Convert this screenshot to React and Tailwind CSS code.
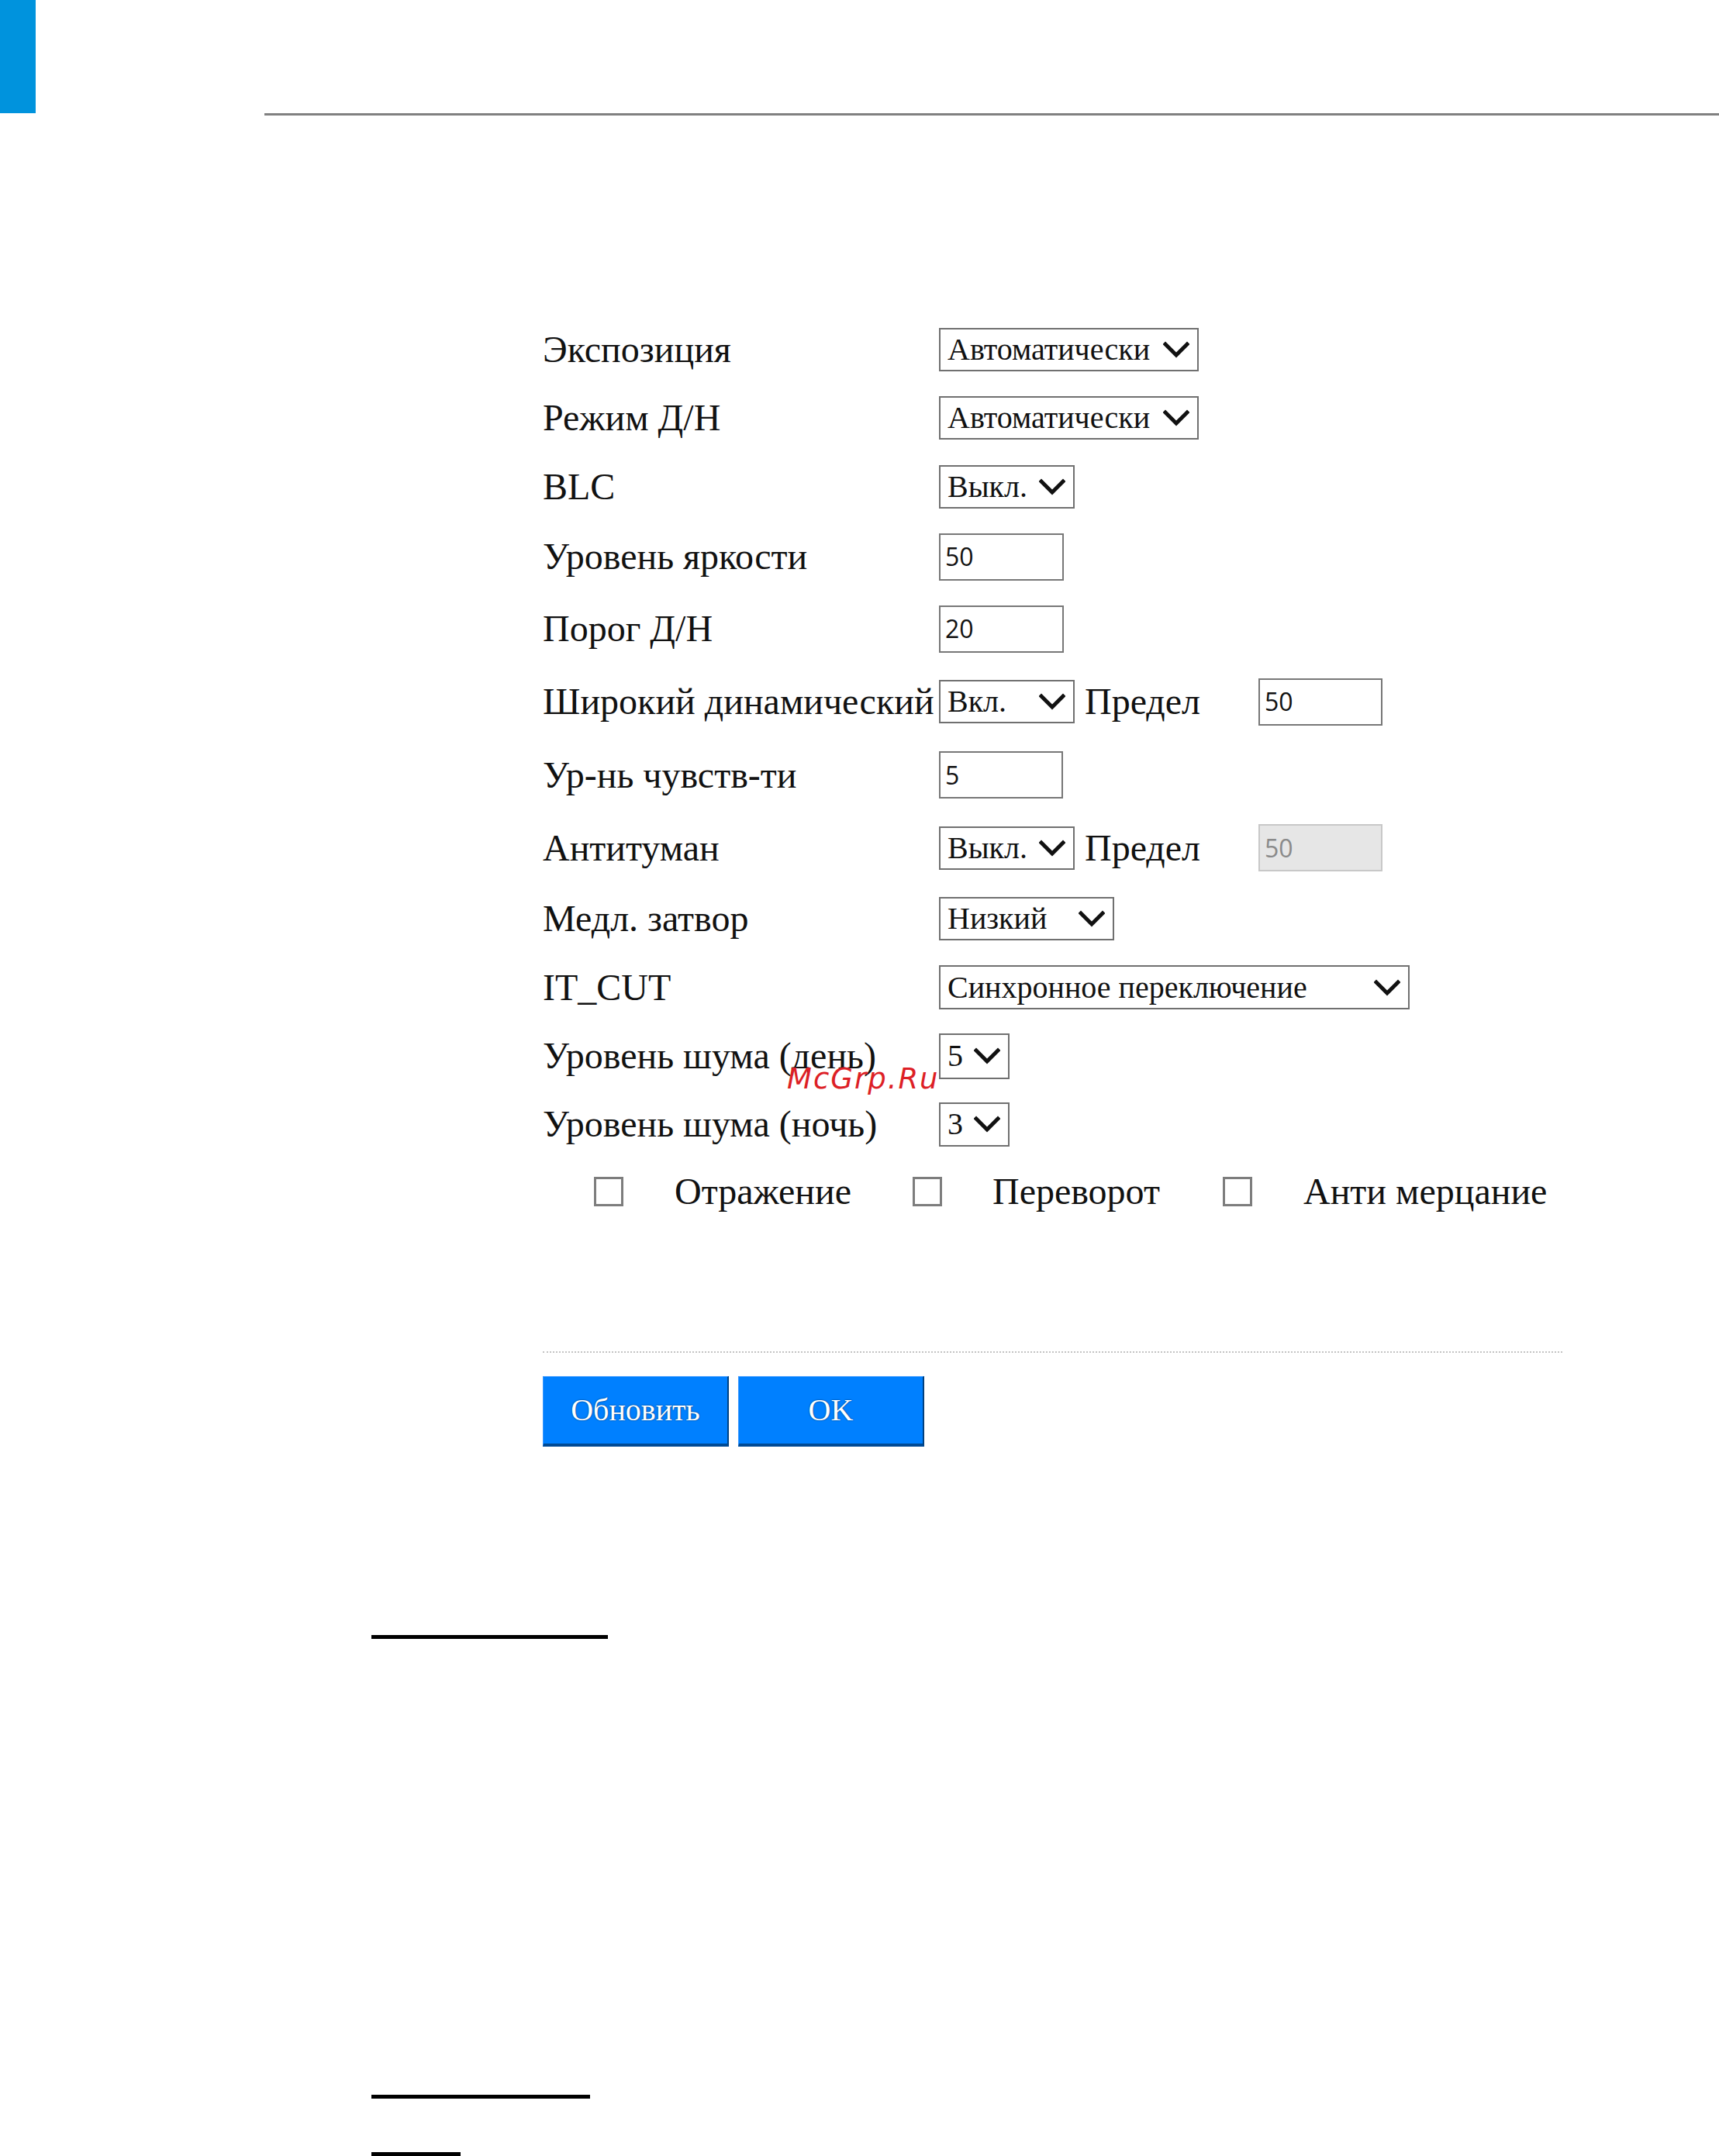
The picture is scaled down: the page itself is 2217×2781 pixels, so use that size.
import React from "react";

const serif = "font-['Liberation_Serif','Times_New_Roman',serif]";

function Chevron() {
  return (
    <svg width="34" height="22" viewBox="0 0 34 22" className="shrink-0">
      <polyline points="3,4 17,18 31,4" fill="none" stroke="#111" strokeWidth="5" strokeLinecap="square" />
    </svg>
  );
}

function Select({ w, h = "h-[56px]", text }) {
  return (
    <div className={`${w} ${h} shrink-0 border-2 border-[#707070] bg-white flex items-center justify-between pl-[9px] pr-[10px]`}>
      <span className={`${serif} text-[40px] leading-none text-[#111] whitespace-nowrap`}>{text}</span>
      <Chevron />
    </div>
  );
}

function Input({ w = "w-[161px]", value, disabled }) {
  return (
    <div
      className={`${w} h-[61px] shrink-0 border-2 flex items-center pl-[6px] font-['Open_Sans','Noto_Sans',sans-serif] text-[32px] leading-none ${
        disabled ? "bg-[#e6e6e6] border-[#c8c8c8] text-[#8a8a8a]" : "bg-white border-[#777777] text-[#111]"
      }`}
    >
      {value}
    </div>
  );
}

function Row({ h, label, children }) {
  return (
    <div className={`flex items-center ${h}`}>
      <div className={`w-[511px] shrink-0 ${serif} text-[48px] leading-none text-[#111] whitespace-nowrap`}>{label}</div>
      {children}
    </div>
  );
}

function Checkbox() {
  return <div className="w-[38px] h-[38px] shrink-0 border-[3px] border-[#7d7d7d] bg-white" />;
}

function Pred() {
  return <span className={`ml-[13px] w-[224px] shrink-0 ${serif} text-[48px] leading-none text-[#111]`}>Предел</span>;
}

export default function App() {
  return (
    <div className="relative w-[2217px] min-h-[2781px] bg-white overflow-hidden">
      <div className="flex">
        <div className="w-[46px] h-[146px] bg-[#0093dd] shrink-0" />
        <div className="flex-1 ml-[295px] pt-[146px]">
          <div className="h-[3px] bg-[#808080]" />
        </div>
      </div>

      <div className="ml-[700px] mt-[257px] flex flex-col">
        <Row h="h-[89px]" label="Экспозиция">
          <Select w="w-[335px]" text="Автоматически" />
        </Row>
        <Row h="h-[88px]" label="Режим Д/Н">
          <Select w="w-[335px]" text="Автоматически" />
        </Row>
        <Row h="h-[89px]" label="BLC">
          <Select w="w-[175px]" text="Выкл." />
        </Row>
        <Row h="h-[92px]" label="Уровень яркости">
          <Input value="50" />
        </Row>
        <Row h="h-[94px]" label="Порог Д/Н">
          <Input value="20" />
        </Row>
        <Row h="h-[94px]" label="Широкий динамический">
          <Select w="w-[175px]" text="Вкл." />
          <Pred />
          <Input w="w-[160px]" value="50" />
        </Row>
        <Row h="h-[95px]" label="Ур-нь чувств-ти">
          <Input w="w-[160px]" value="5" />
        </Row>
        <Row h="h-[93px]" label="Антитуман">
          <Select w="w-[175px]" text="Выкл." />
          <Pred />
          <Input w="w-[160px]" value="50" disabled />
        </Row>
        <Row h="h-[89px]" label="Медл. затвор">
          <Select w="w-[226px]" text="Низкий" />
        </Row>
        <Row h="h-[89px]" label="IT_CUT">
          <Select w="w-[607px]" h="h-[57px]" text="Синхронное переключение" />
        </Row>
        <Row h="h-[88px]" label="Уровень шума (день)">
          <Select w="w-[91px]" h="h-[59px]" text="5" />
        </Row>
        <Row h="h-[88px]" label="Уровень шума (ночь)">
          <Select w="w-[91px]" h="h-[57px]" text="3" />
        </Row>

        <div className={`flex items-center h-[86px] pl-[66px] ${serif} text-[48px] leading-none text-[#111]`}>
          <Checkbox />
          <span className="ml-[66px] w-[307px] shrink-0">Отражение</span>
          <Checkbox />
          <span className="ml-[65px] w-[297px] shrink-0">Переворот</span>
          <Checkbox />
          <span className="ml-[66px] whitespace-nowrap">Анти мерцание</span>
        </div>

        <div className="mt-[163px] w-[1315px] border-t-[2px] border-dotted border-[#c4c4c4]" />

        <div className="mt-[30px] flex gap-[12px]">
          {["Обновить", "OK"].map((t) => (
            <button
              key={t}
              className={`w-[240px] h-[91px] bg-[#0080ff] border-t border-t-[#5aa8ff] border-l border-l-[#3a98ff] border-r-2 border-r-[#00407f] border-b-[4px] border-b-[#004a94] flex items-center justify-center text-white ${serif} text-[40px] leading-none [text-shadow:0_0_2px_#002a55]`}
            >
              {t}
            </button>
          ))}
        </div>
      </div>

      <div className="ml-[479px] mt-[243px] w-[305px] h-[5px] bg-black" />
      <div className="ml-[479px] mt-[588px] w-[282px] h-[5px] bg-black" />
      <div className="ml-[479px] mt-[69px] w-[115px] h-[5px] bg-black" />

      <div className="absolute left-[1015px] top-[1373px] font-['DejaVu_Sans','Verdana',sans-serif] italic text-[37px] leading-none tracking-[2px] text-[#dd1f26]">
        McGrp.Ru
      </div>
    </div>
  );
}
